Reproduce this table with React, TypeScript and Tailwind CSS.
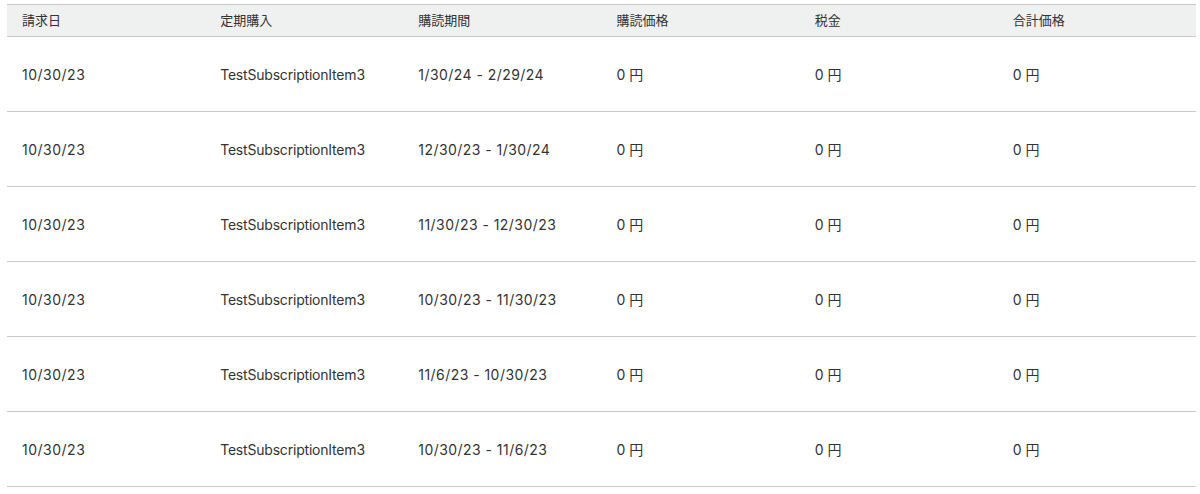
const headers = ["請求日", "定期購入", "購読期間", "購読価格", "税金", "合計価格"];

const periods = [
  "1/30/24 - 2/29/24",
  "12/30/23 - 1/30/24",
  "11/30/23 - 12/30/23",
  "10/30/23 - 11/30/23",
  "11/6/23 - 10/30/23",
  "10/30/23 - 11/6/23",
];

export default function App() {
  return (
    <div
      className="w-[1200px] h-[494px] bg-white pt-[4px] pl-[7px]"
      style={{ fontFamily: 'Inter, "Noto Sans CJK JP", sans-serif' }}
    >
      <table className="w-[1189px] table-fixed border-collapse text-[#333333]">
        <thead>
          <tr className="bg-[#eff0f0] border-y border-[#c9c9c9]">
            {headers.map((h) => (
              <th key={h} className="h-[32px] pl-[15px] text-left text-[13px] font-normal align-middle">
                {h}
              </th>
            ))}
          </tr>
        </thead>
        <tbody>
          {periods.map((p, i) => (
            <tr key={i} className="border-b border-[#c9c9c9] h-[75px] text-[14px]">
              <td className="pl-[15px] align-middle tracking-[0.5px]">10/30/23</td>
              <td className="pl-[15px] align-middle tracking-[-0.2px]">TestSubscriptionItem3</td>
              <td className="pl-[15px] align-middle tracking-[0.45px]">{p}</td>
              <td className="pl-[15px] align-middle">0 円</td>
              <td className="pl-[15px] align-middle">0 円</td>
              <td className="pl-[15px] align-middle">0 円</td>
            </tr>
          ))}
        </tbody>
      </table>
    </div>
  );
}
